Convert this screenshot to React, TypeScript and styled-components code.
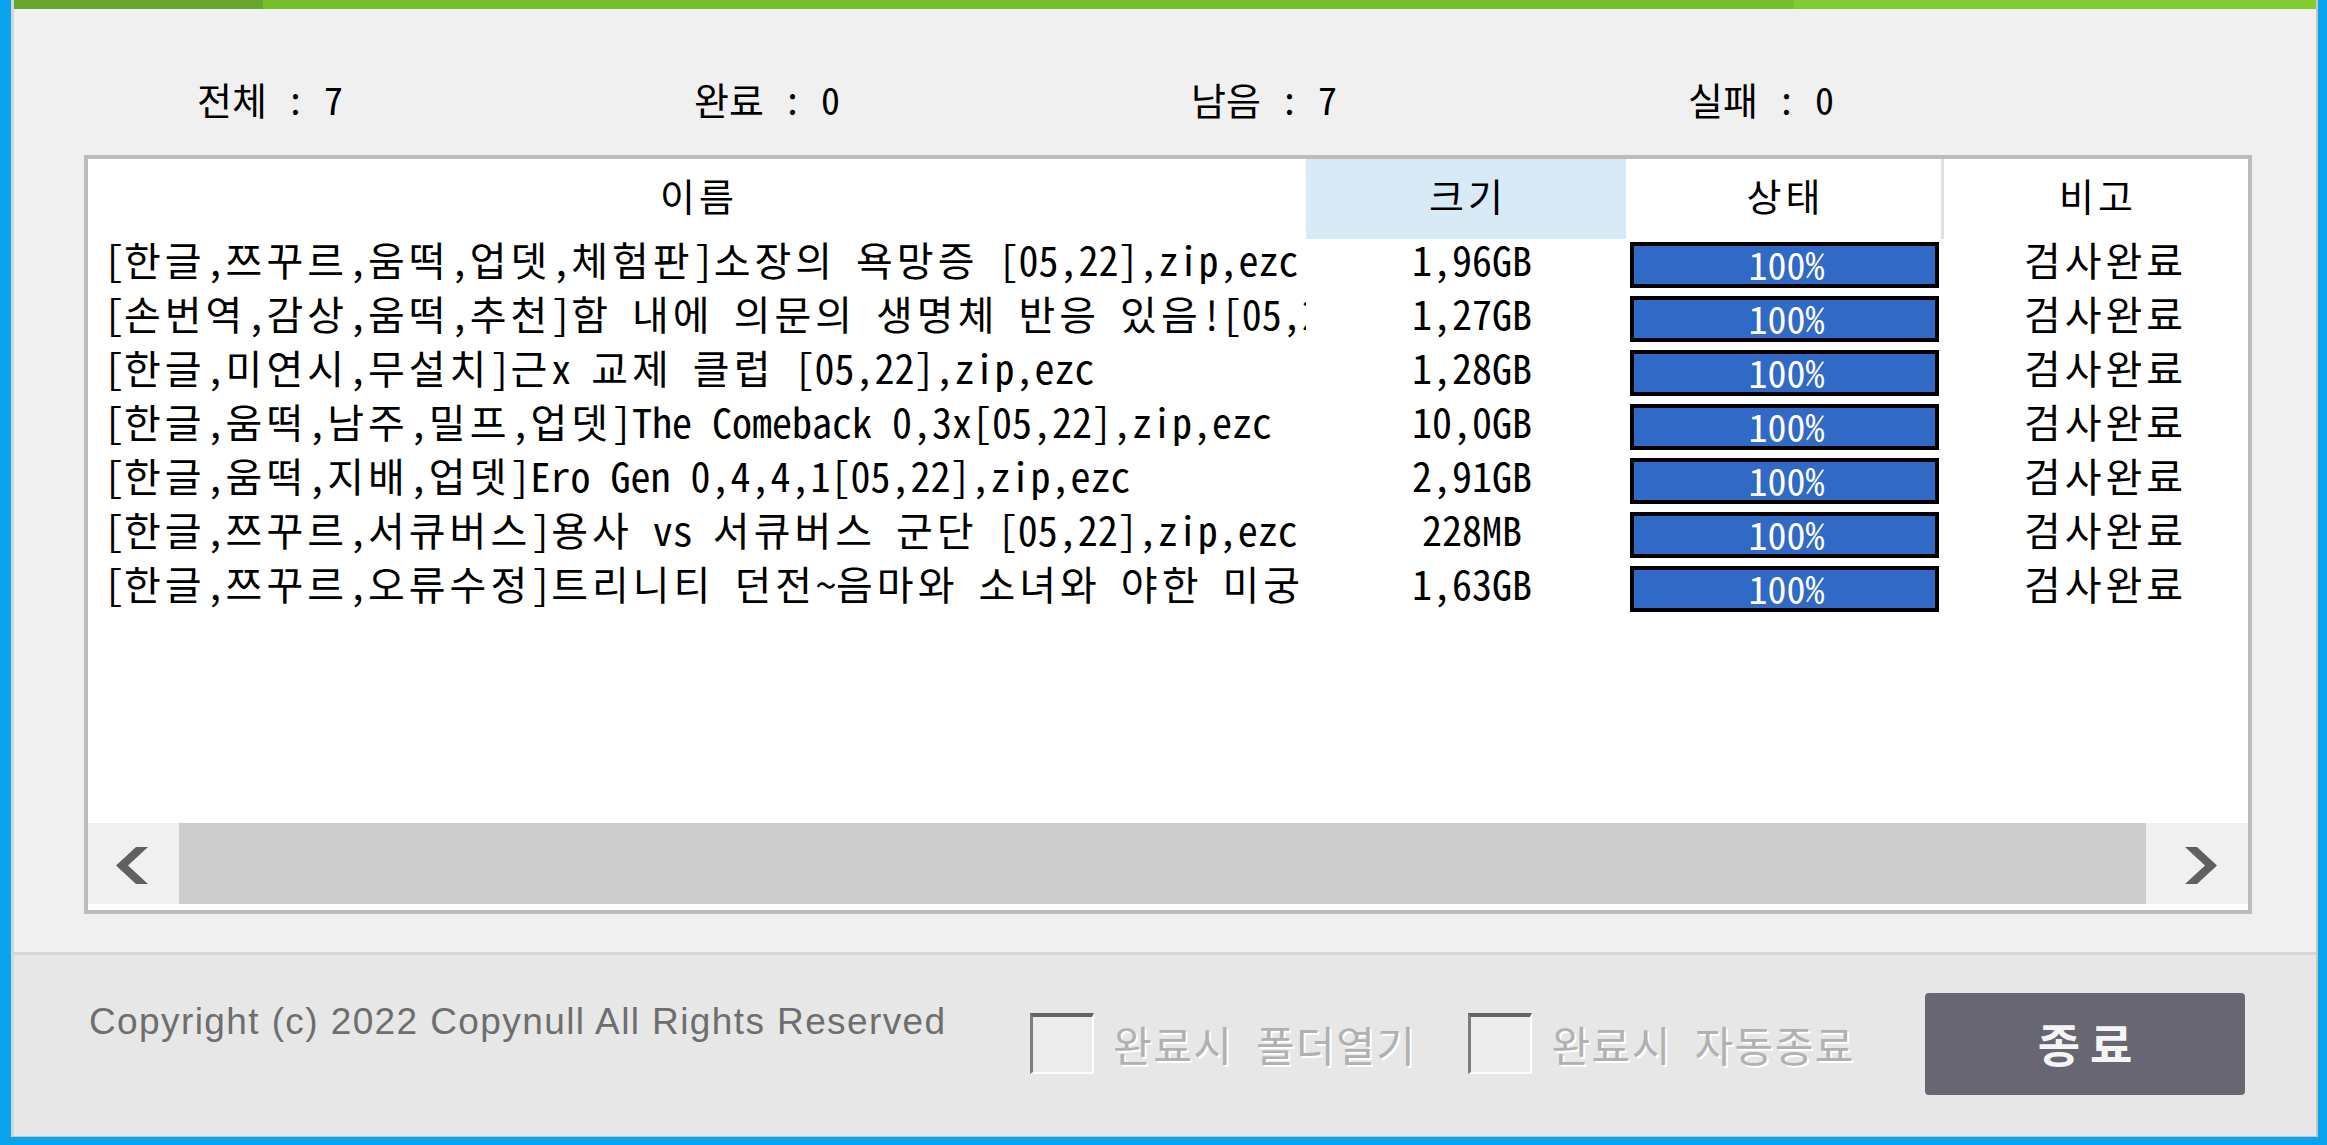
import React from 'react';
import styled, { createGlobalStyle } from 'styled-components';

const GlobalStyle = createGlobalStyle`
  html, body {
    margin: 0;
    padding: 0;
    background: #0aa3ef;
  }
  * {
    box-sizing: border-box;
  }
`

const KR = `"Noto Sans CJK KR", "Noto Sans", sans-serif`;
// half-width latin + full-width hangul, like the old bitmap gulim
const KR_MONO = `"Noto Sans Mono CJK KR", "Noto Sans CJK KR", monospace`;

const Screen = styled.div`
  width: 2327px;
  height: 1145px;
  padding: 0 9px 8px 11px;
  background: #0aa3ef;
  display: flex;
`

const Window = styled.div`
  flex: 1;
  display: flex;
  flex-direction: column;
  border-left: 3px solid #d6d6d6;
  border-right: 2px solid #c5c5c5;
  border-bottom: 1px solid #c5c5c5;
  font-family: ${KR_MONO};
  color: #000;
`

const TitleStrip = styled.div`
  height: 9px;
  background: linear-gradient(
    to right,
    #68a52f 0,
    #68a52f 249px,
    #76c02b 249px,
    #76c02b 1780px,
    #80cc32 1780px
  );
`

const Main = styled.div`
  display: flex;
  flex-direction: column;
  background: #f0f0f0;
  padding: 71px 64px 38px 70px;
`

const StatsRow = styled.div`
  display: grid;
  grid-template-columns: repeat(4, 497px);
  padding-left: 113px;
  height: 38px;
  margin-bottom: 37px;
  font-size: 38px;
  line-height: 1;
`

const Stat = styled.span`
  white-space: pre;
`

const ListBox = styled.div`
  height: 759px;
  border: 4px solid #bcbcbc;
  background: #fff;
  display: flex;
  flex-direction: column;
`

const ListArea = styled.div`
  flex: 1;
  overflow: hidden;
`

const COLUMNS = '1218px 320px 315px 307px';

const HeaderRow = styled.div`
  display: grid;
  grid-template-columns: ${COLUMNS};
  height: 80px;
`

const HeaderCell = styled.div<{ $active?: boolean; $divider?: boolean }>`
  display: flex;
  align-items: center;
  justify-content: center;
  padding: 0 0 8px 4px;
  font-size: 38px;
  letter-spacing: 4px;
  line-height: 1;
  background: ${p => (p.$active ? '#d9eaf7' : '#fff')};
  border-left: ${p => (p.$divider ? '3px solid #e0e0e0' : 'none')};
`

const Row = styled.div`
  display: grid;
  grid-template-columns: ${COLUMNS};
  height: 54px;
  font-size: 40px;
  line-height: 1;
`

const NameCell = styled.div`
  padding-left: 16px;
  white-space: pre;
  overflow: hidden;
`

// hangul in the bitmap font sits on a wider cell than latin
const Hangul = styled.span`
  letter-spacing: 4px;
`

const SizeCell = styled.div`
  text-align: center;
  padding-left: 12px;
  white-space: nowrap;
`

const StatusCell = styled.div`
  padding: 3px 0 0 4px;
`

const Bar = styled.div`
  width: 309px;
  height: 46px;
  border: 4px solid #000;
  background: #3169c6;
  color: #fff;
  font-size: 38px;
  line-height: 1;
  display: flex;
  align-items: center;
  justify-content: center;
  padding: 0 0 3px 4px;
`

const RemarkCell = styled.div`
  text-align: center;
  padding-left: 22px;
  letter-spacing: 4px;
  white-space: nowrap;
`

const ScrollTrack = styled.div`
  height: 81px;
  margin-bottom: 6px;
  display: flex;
`

const ScrollButton = styled.div<{ $width: number; $offset: number }>`
  width: ${p => p.$width}px;
  background: #f0f0f0;
  padding: 24px 0 0 ${p => p.$offset}px;
`

const ScrollThumb = styled.div`
  flex: 1;
  background: #cdcdcd;
`

const Separator = styled.div`
  height: 3px;
  background: #d6d6d6;
`

const Footer = styled.div`
  flex: 1;
  display: flex;
  align-items: center;
  background: #e7e7e7;
  padding: 0 71px 4px 75px;
`

const Copyright = styled.div`
  width: 941px;
  align-self: flex-start;
  margin-top: 48px;
  font-family: "Liberation Sans", Arial, sans-serif;
  font-size: 37px;
  letter-spacing: 1.4px;
  line-height: 1;
  color: #6e6e6e;
  white-space: nowrap;
`

const Option = styled.label<{ $gapAfter?: number }>`
  display: flex;
  align-items: center;
  gap: 19px;
  margin-right: ${p => p.$gapAfter ?? 0}px;
`

const CheckBox = styled.span`
  width: 64px;
  height: 61px;
  border-top: 4px solid #646464;
  border-left: 3px solid #7c7c7c;
  border-right: 2px solid #fdfdfd;
  border-bottom: 2px solid #fdfdfd;
  background: #ececec;
`

const OptionLabel = styled.span`
  font-size: 42px;
  letter-spacing: 1.5px;
  line-height: 1;
  color: #b1b1b1;
  text-shadow: 2px 2px 0 #ffffff;
  white-space: pre;
`

const CloseButton = styled.button`
  margin-left: auto;
  width: 320px;
  height: 102px;
  border: none;
  border-radius: 4px;
  background: #676672;
  color: #f5f5f5;
  font-family: ${KR};
  font-size: 46px;
  font-weight: 700;
  letter-spacing: 10px;
  padding: 0 0 4px 10px;
  display: flex;
  align-items: center;
  justify-content: center;
`

const Chevron: React.FC<{ dir: 'left' | 'right' }> = ({ dir }) => (
  <svg width="32" height="37" viewBox="0 0 32 37">
    {dir === 'left' ? (
      <polygon points="32,0 20,0 0,18.5 20,37 32,37 12,18.5" fill="#606060" />
    ) : (
      <polygon points="0,0 12,0 32,18.5 12,37 0,37 20,18.5" fill="#606060" />
    )}
  </svg>
)

const HANGUL = /([\u1100-\u11ff\u3130-\u318f\uac00-\ud7af]+)/;

const renderName = (name: string) =>
  name.split(HANGUL).map((part, i) =>
    HANGUL.test(part) ? <Hangul key={i}>{part}</Hangul> : part
  )

interface FileItem {
  name: string;
  size: string;
}

const files: FileItem[] = [
  { name: '[한글,쯔꾸르,움떡,업뎃,체험판]소장의 욕망증 [05,22],zip,ezc', size: '1,96GB' },
  { name: '[손번역,감상,움떡,추천]함 내에 의문의 생명체 반응 있음![05,22],zip,ezc', size: '1,27GB' },
  { name: '[한글,미연시,무설치]근x 교제 클럽 [05,22],zip,ezc', size: '1,28GB' },
  { name: '[한글,움떡,남주,밀프,업뎃]The Comeback 0,3x[05,22],zip,ezc', size: '10,0GB' },
  { name: '[한글,움떡,지배,업뎃]Ero Gen 0,4,4,1[05,22],zip,ezc', size: '2,91GB' },
  { name: '[한글,쯔꾸르,서큐버스]용사 vs 서큐버스 군단 [05,22],zip,ezc', size: '228MB' },
  { name: '[한글,쯔꾸르,오류수정]트리니티 던전~음마와 소녀와 야한 미궁 [05,22],zip,ezc', size: '1,63GB' },
]

const App: React.FC = () => {
  return (
    <Screen>
      <GlobalStyle />
      <Window>
        <TitleStrip />
        <Main>
          <StatsRow>
            <Stat>전체 : 7</Stat>
            <Stat>완료 : 0</Stat>
            <Stat>남음 : 7</Stat>
            <Stat>실패 : 0</Stat>
          </StatsRow>
          <ListBox>
            <ListArea>
              <HeaderRow>
                <HeaderCell>이름</HeaderCell>
                <HeaderCell $active>크기</HeaderCell>
                <HeaderCell>상태</HeaderCell>
                <HeaderCell $divider>비고</HeaderCell>
              </HeaderRow>
              {files.map(file => (
                <Row key={file.name}>
                  <NameCell>{renderName(file.name)}</NameCell>
                  <SizeCell>{file.size}</SizeCell>
                  <StatusCell>
                    <Bar>100%</Bar>
                  </StatusCell>
                  <RemarkCell>검사완료</RemarkCell>
                </Row>
              ))}
            </ListArea>
            <ScrollTrack>
              <ScrollButton $width={91} $offset={28}>
                <Chevron dir="left" />
              </ScrollButton>
              <ScrollThumb />
              <ScrollButton $width={102} $offset={39}>
                <Chevron dir="right" />
              </ScrollButton>
            </ScrollTrack>
          </ListBox>
        </Main>
        <Separator />
        <Footer>
          <Copyright>Copyright (c) 2022 Copynull All Rights Reserved</Copyright>
          <Option $gapAfter={52}>
            <CheckBox />
            <OptionLabel>완료시 폴더열기</OptionLabel>
          </Option>
          <Option>
            <CheckBox />
            <OptionLabel>완료시 자동종료</OptionLabel>
          </Option>
          <CloseButton>종료</CloseButton>
        </Footer>
      </Window>
    </Screen>
  )
}

export default App;
